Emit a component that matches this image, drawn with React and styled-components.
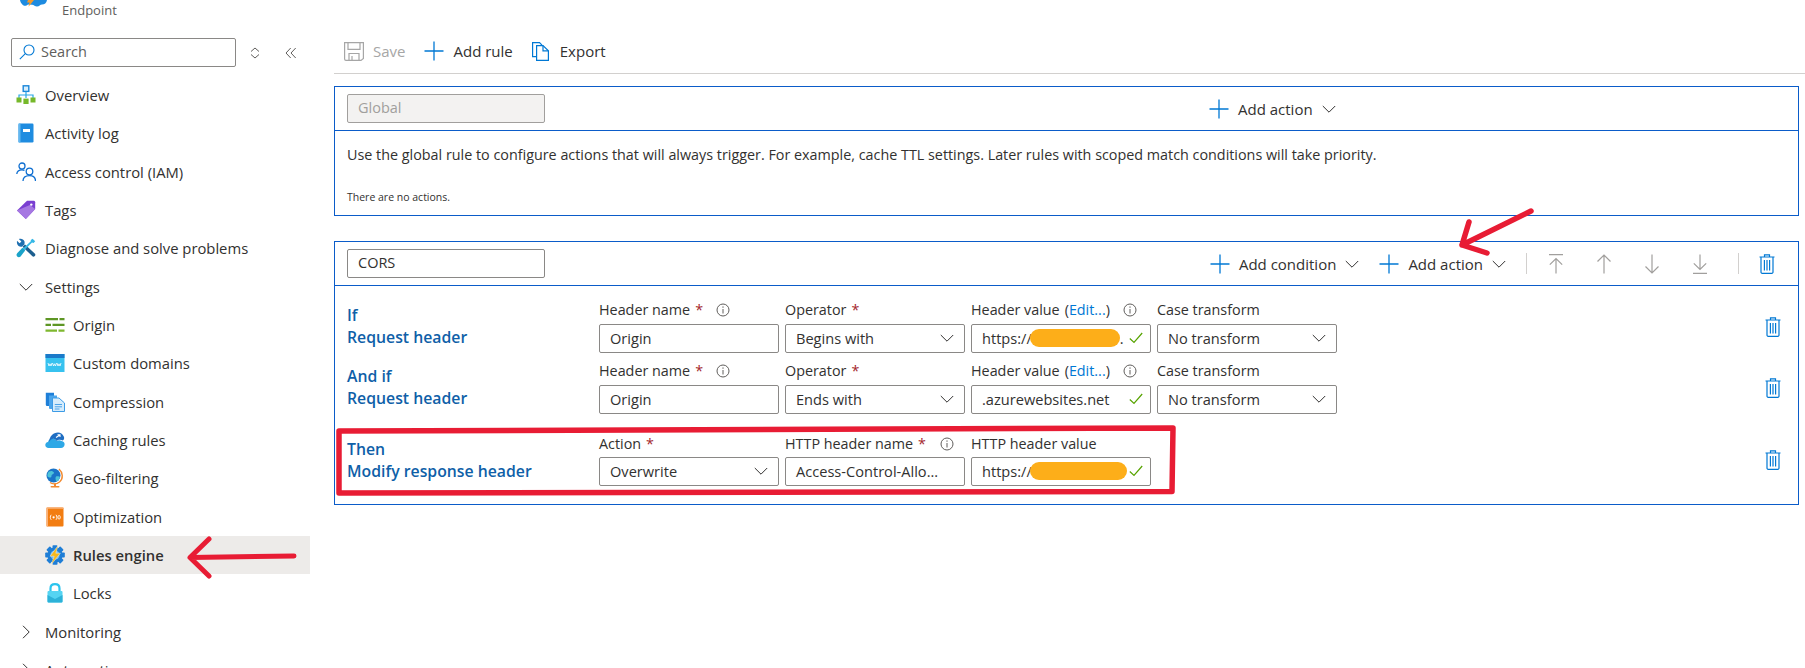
import React from "react"
import styled, { createGlobalStyle } from "styled-components"

const GlobalStyle = createGlobalStyle`
  html, body {
    margin: 0;
    background: #fff;
    font-family: "Open Sans", "Liberation Sans", sans-serif;
    color: #323130;
  }
`

/* ---------- small line icons ---------- */

const Plus = () => (
  <svg width="20" height="20" viewBox="0 0 20 20" fill="none" stroke="#0078d4" strokeWidth="1.3">
    <path d="M0.5 10H19.5M10 0.5V19.5" />
  </svg>
)

const Chevron = ({ dir = "down", color = "#323130", size = 14 }) => (
  <svg width={size} height={size} viewBox="0 0 14 14" fill="none" stroke={color} strokeWidth="1">
    {dir === "down" ? <path d="M0.8 4L7 10.2L13.2 4" /> : <path d="M4 0.8L10.2 7L4 13.2" />}
  </svg>
)

const Info = () => (
  <svg width="14" height="14" viewBox="0 0 14 14" fill="none" stroke="#605e5c" strokeWidth="1">
    <circle cx="7" cy="7" r="6" />
    <path d="M7 6V10.5M7 3.4V4.8" />
  </svg>
)

const Check = () => (
  <svg width="14" height="12" viewBox="0 0 14 12" fill="none" stroke="#57a300" strokeWidth="1.2">
    <path d="M0.8 6.5L5 10.5L13.2 1" />
  </svg>
)

const Trash = () => (
  <svg width="16" height="20" viewBox="0 0 16 20" fill="none" stroke="#0078d4" strokeWidth="1.2">
    <path d="M0.5 3H15.5M5.5 3V0.8H10.5V3M2 3V18A1.2 1.2 0 0 0 3.2 19.3H12.8A1.2 1.2 0 0 0 14 18V3" />
    <path d="M5.4 6V16.5M8 6V16.5M10.6 6V16.5" />
  </svg>
)

const MoveIcon = ({ kind }) => (
  <svg width="16" height="20" viewBox="0 0 16 20" fill="none" stroke="#a19f9d" strokeWidth="1.2">
    {kind === "top" && <path d="M1 0.7H15M8 4.5V19.5M1.8 10.7L8 4.5L14.2 10.7" />}
    {kind === "up" && <path d="M8 1V19.5M1.5 7.5L8 1L14.5 7.5" />}
    {kind === "down" && <path d="M8 0.5V19M1.5 12.5L8 19L14.5 12.5" />}
    {kind === "bottom" && <path d="M1 19.3H15M8 0.5V15.5M1.8 9.3L8 15.5L14.2 9.3" />}
  </svg>
)

const SaveIcon = () => (
  <svg width="20" height="19" viewBox="0 0 20 19" fill="none" stroke="#a6a6a6" strokeWidth="1.2">
    <path d="M0.6 0.6H19.4V16.5L17 18.4H2A1.4 1.4 0 0 1 0.6 17Z" />
    <path d="M4 0.6V7.4H16V0.6M5 18.4V11.5H15V18.4M8 14V18.4" />
  </svg>
)

const ExportIcon = () => (
  <svg width="17" height="19" viewBox="0 0 17 19" fill="none" stroke="#0078d4" strokeWidth="1.2">
    <path d="M4.5 14.6H0.6V0.6H7.5L10 3.2" />
    <path d="M4.6 3.6H11L16.4 8.8V18.4H4.6Z" />
    <path d="M11 3.6V8.8H16.4" />
  </svg>
)

const SearchIcon = () => (
  <svg width="16" height="16" viewBox="0 0 16 16" fill="none" stroke="#0078d4" strokeWidth="1.1">
    <circle cx="10" cy="6" r="5" />
    <path d="M6.3 9.7L0.8 15.2" />
  </svg>
)

/* ---------- coloured service icons, drawn on a 20 box ---------- */

const Svc = ({ children }) => (
  <svg width="20" height="20" viewBox="0 0 20 20">
    {children}
  </svg>
)

const OverviewIcon = () => (
  <Svc>
    <rect x="7.2" y="0.8" width="5.6" height="5.6" fill="#d8eefc" stroke="#1a86d9" strokeWidth="1.4" />
    <path d="M10 6.5V13M3 13V10H17V13" fill="none" stroke="#2aa7e8" strokeWidth="1.2" />
    <rect x="0.5" y="12.5" width="5" height="5" fill="#76b82a" />
    <rect x="7.4" y="13.6" width="5.2" height="5.4" fill="#76b82a" />
    <rect x="14.5" y="12.5" width="5" height="5" fill="#76b82a" />
  </Svc>
)

const BookIcon = () => (
  <Svc>
    <rect x="2.5" y="0.5" width="15" height="19" rx="1.2" fill="#1f8ce0" />
    <rect x="2.5" y="0.5" width="2" height="19" fill="#63b7f0" />
    <rect x="7" y="6" width="7" height="3" fill="#fff" />
  </Svc>
)

const PeopleIcon = () => (
  <Svc>
    <g fill="none" stroke="#0f6fd1" strokeWidth="1.3">
      <circle cx="6" cy="4" r="3" />
      <circle cx="13.5" cy="9.5" r="3.3" />
      <path d="M0.8 12C1 9 3 7.8 6 7.8C7 7.8 7.8 8 8.5 8.3" />
      <path d="M7 19C7 15.5 9.5 13.6 13.5 13.6C17.5 13.6 19.5 15.5 19.5 19" />
    </g>
  </Svc>
)

const TagIcon = () => (
  <Svc>
    <path d="M11 0.8H18A1.5 1.5 0 0 1 19.2 2.2V9L9.8 19L1 10.5Z" fill="#7a3fd1" />
    <path d="M1 10.5L9.8 19L19.2 9L14 5Z" fill="#a678e2" />
    <circle cx="15.3" cy="4.6" r="1.2" fill="#fff" />
  </Svc>
)

const ToolsIcon = () => (
  <Svc>
    <path d="M6.5 8.8L9 6.4L19 15.8C19.6 16.6 19.4 17.4 18.8 18C18 18.8 17 18.8 16.4 18.2Z" fill="#1d5f8f" />
    <path d="M1 2.8L3.6 5.2L5.4 3.6L2.8 1C5.2 0.2 7.6 1 8.4 3.2C8.8 4.4 8.6 5.6 8.4 6.4L6.2 8.6C5 9 3.6 8.8 2.6 8C1.2 6.8 0.6 4.8 1 2.8Z" fill="#1f6fb0" />
    <path d="M16.6 0.8L19.2 3.2L17.6 5L16 4.6L8 12.4L6.6 11L14.8 3.2L14.8 2Z" fill="#35b8e6" />
    <path d="M6.4 9.8L9.2 12.6L4.6 18.4C3.4 19.6 1.8 19.2 1 18.2C0.2 17.2 0.4 16 1.4 15Z" fill="#1aa3c9" />
  </Svc>
)

const OriginIcon = () => (
  <Svc>
    <path d="M0.5 3H13V5.2H0.5ZM14.5 3H19.5V5.2H14.5Z" fill="#5e9624" />
    <path d="M0.5 8.8H6V11H0.5ZM7.5 8.8H19.5V11H7.5Z" fill="#5e9624" />
    <path d="M0.5 14.6H12V16.8H0.5ZM13.5 14.6H19.5V16.8H13.5Z" fill="#7fb82f" />
  </Svc>
)

const DomainIcon = () => (
  <Svc>
    <rect x="0.5" y="1" width="19" height="18" fill="#37c2ef" />
    <rect x="0.5" y="1" width="19" height="4" fill="#1b7ac9" />
    <path d="M3 10L4 13L5 10.8L6 13L7 10M7.5 10L8.5 13L9.5 10.8L10.5 13L11.5 10M12 10L13 13L14 10.8L15 13L16 10" fill="none" stroke="#fff" strokeWidth="0.8" />
  </Svc>
)

const CompressionIcon = () => (
  <Svc>
    <path d="M0.8 0.8H9V14H2A1.2 1.2 0 0 1 0.8 12.8Z" fill="#1f7fd8" />
    <path d="M4 3.5H12V17H5A1 1 0 0 1 4 16Z" fill="#4aa5ec" />
    <path d="M7.5 6H14L19.5 11V19.5H7.5Z" fill="#d6ecfb" stroke="#3c9be6" />
    <path d="M9.8 12.5H17M9.8 14.8H17M9.8 17H14.5" stroke="#3c9be6" strokeWidth="0.9" />
  </Svc>
)

const CloudIcon = () => (
  <Svc>
    <path d="M3.5 18C1.5 18 0.3 16.6 0.3 15C0.3 13.4 1.4 12.3 3 12C3.6 9.5 5.8 8 8.5 8.5C10 9 11 10 11.5 11C13 10.2 15 10 16.5 11C18.7 11.2 19.8 12.8 19.6 14.6C19.4 16.8 18 18 16 18Z" fill="#2ea8e6" />
    <path d="M4 12C4.5 6.5 8 2.5 13 2.5C15.5 2.5 17.5 4 18.8 6.5C19.6 8 19 10 17.5 10.5C16 9.5 13 9.5 11.5 11C10.5 8.5 7 7 4 12Z" fill="#1f6ec2" />
    <path d="M11 7.5L14.5 5.2M12.5 4.8H15V7" fill="none" stroke="#fff" strokeWidth="1.1" />
  </Svc>
)

const GlobeIcon = () => (
  <Svc>
    <path d="M14 1C18 4.5 18.5 10.5 14.5 14C11.5 16.3 7.5 16.3 5 14.5" fill="none" stroke="#f28a30" strokeWidth="1.4" />
    <rect x="9" y="15.5" width="2" height="2.5" fill="#f28a30" />
    <rect x="5.5" y="18" width="9" height="1.6" rx="0.8" fill="#f28a30" />
    <circle cx="8.5" cy="7.5" r="7" fill="#1a74c8" />
    <path d="M4 3.5C6 2.5 8 3 9 4.5C9 6.5 6.5 6 6.5 8C6.5 10 4 10 2.5 8.5C2 6.5 2.8 4.5 4 3.5ZM11 8.5C12.8 8 14.5 8.5 15 9C14.5 11 13.5 12.8 11.5 13.5C10.5 12 10 10 11 8.5Z" fill="#4cc3d9" />
  </Svc>
)

const OptimizeIcon = () => (
  <Svc>
    <rect x="1.5" y="0.5" width="17" height="19" rx="1" fill="#f27d12" />
    <path d="M1.5 0.5H18.5V2L17 1.7H3V19.5H1.5Z" fill="#f9b27a" />
    <circle cx="8.6" cy="10.3" r="1.1" fill="#fff" />
    <rect x="13" y="8.6" width="2.2" height="3.4" rx="1" fill="none" stroke="#fff" strokeWidth="0.9" />
    <path d="M6.2 7.8C5 9.3 5 11.3 6.2 12.8M11 7.8C12.2 9.3 12.2 11.3 11 12.8" fill="none" stroke="#fff" strokeWidth="0.9" />
  </Svc>
)

const GearBoltIcon = () => (
  <Svc>
    <g fill="#1f7ed6">
      <circle cx="10" cy="10" r="7.6" />
      {[0, 45, 90, 135, 180, 225, 270, 315].map(a => (
        <rect key={a} x="7.5" y="0.2" width="5" height="4.6" rx="0.8" transform={`rotate(${a} 10 10)`} />
      ))}
    </g>
    <circle cx="10" cy="10" r="4.6" fill="#7dbdf0" />
    <path d="M13.2 0.4L5 11.2H9.2L6.2 19.6L15.4 8.2H10.8Z" fill="#f6b81e" stroke="#fff" strokeWidth="0.4" />
  </Svc>
)

const LockIcon = () => (
  <Svc>
    <path d="M5.5 9V5.5C5.5 3 7.3 1.2 10 1.2C12.7 1.2 14.5 3 14.5 5.5V9" fill="none" stroke="#2cc4ee" strokeWidth="2.2" />
    <rect x="2.5" y="8" width="15" height="11.5" rx="1" fill="#55d4f2" />
    <path d="M2.5 12L10 16L17.5 12V18.5A1 1 0 0 1 16.5 19.5H3.5A1 1 0 0 1 2.5 18.5Z" fill="#2db2d8" />
  </Svc>
)

const SortIcon = () => (
  <svg width="10" height="12" viewBox="0 0 10 12" fill="none" stroke="#605e5c" strokeWidth="1">
    <path d="M1 4.5L5 1L9 4.5M1 7.5L5 11L9 7.5" />
  </svg>
)

const CollapseIcon = () => (
  <svg width="12" height="12" viewBox="0 0 12 12" fill="none" stroke="#605e5c" strokeWidth="1">
    <path d="M5.7 1L1 6L5.7 11M10.7 1L6 6L10.7 11" />
  </svg>
)

const Logo = () => (
  <svg width="27" height="7" viewBox="0 0 27 7">
    <path d="M0 0H27C26.5 3 24.5 4.5 22 4.5C20 4.5 19.5 6.6 17 6.6C15 6.6 14 5 12 4.8L8 4.5C6 6.5 3 6 2 4C1 3 0.2 1.5 0 0Z" fill="#1d8be0" />
    <path d="M8 0H14L8.5 6.8L9.5 2.5H7Z" fill="#f39a2c" />
  </svg>
)

/* ---------- sidebar ---------- */

const Page = styled.div`
  position: relative;
  display: flex;
  width: 1805px;
  height: 668px;
  overflow: hidden;
`

const Sidebar = styled.aside`
  flex: none;
  width: 310px;
`

const Brand = styled.div`
  display: flex;
  height: 38px;
  padding-left: 20px;
  gap: 15px;
`

const BrandName = styled.span`
  font-size: 13px;
  line-height: 20px;
  color: #605e5c;
`

const SearchRow = styled.div`
  display: flex;
  align-items: center;
  height: 29px;
  margin: 0 0 9px 11px;
`

const SearchBox = styled.div`
  display: flex;
  align-items: center;
  box-sizing: border-box;
  width: 225px;
  height: 29px;
  padding: 0 0 2px 7px;
  gap: 6px;
  border: 1px solid #8a8886;
  border-radius: 2px;
  font-size: 14.5px;
  color: #605e5c;
`

const SideTool = styled.span`
  display: flex;
  margin-left: ${p => p.$gap}px;
`

const NavRow = styled.div`
  display: flex;
  align-items: center;
  height: 38.33px;
  padding-left: ${p => (p.$sub ? 45 : 16)}px;
  gap: ${p => (p.$sub ? 8 : 9)}px;
  font-size: 14.8px;
  font-weight: ${p => (p.$active ? 600 : 400)};
  color: #323130;
  background: ${p => (p.$active ? "#edebe9" : "transparent")};
  white-space: nowrap;
`

const NavIcon = styled.span`
  display: flex;
  flex: none;
  justify-content: center;
  width: 20px;
`

const navItems = [
  { label: "Overview", icon: <OverviewIcon /> },
  { label: "Activity log", icon: <BookIcon /> },
  { label: "Access control (IAM)", icon: <PeopleIcon /> },
  { label: "Tags", icon: <TagIcon /> },
  { label: "Diagnose and solve problems", icon: <ToolsIcon /> },
  { label: "Settings", icon: <Chevron /> },
  { label: "Origin", icon: <OriginIcon />, sub: true },
  { label: "Custom domains", icon: <DomainIcon />, sub: true },
  { label: "Compression", icon: <CompressionIcon />, sub: true },
  { label: "Caching rules", icon: <CloudIcon />, sub: true },
  { label: "Geo-filtering", icon: <GlobeIcon />, sub: true },
  { label: "Optimization", icon: <OptimizeIcon />, sub: true },
  { label: "Rules engine", icon: <GearBoltIcon />, sub: true, active: true },
  { label: "Locks", icon: <LockIcon />, sub: true },
  { label: "Monitoring", icon: <Chevron dir="right" /> },
  { label: "Automation", icon: <Chevron dir="right" /> },
]

/* ---------- main area ---------- */

const Main = styled.main`
  flex: 1;
  min-width: 0;
  padding: 0 6px 0 24px;
`

const Toolbar = styled.div`
  display: flex;
  align-items: center;
  box-sizing: border-box;
  height: 74px;
  margin: 0 -6px 12px 0;
  padding: 29px 0 0 10px;
  gap: 19px;
  border-bottom: 1px solid #d2d0ce;
`

const ToolButton = styled.div`
  display: flex;
  align-items: center;
  gap: ${p => p.$gap || 9}px;
  font-size: 15px;
  white-space: nowrap;
  color: ${p => (p.$disabled ? "#a6a6a6" : "#323130")};
`

const Card = styled.section`
  box-sizing: border-box;
  height: ${p => p.$height}px;
  margin-bottom: 25px;
  border: 1px solid #0b5cc9;
`

const CardHeader = styled.div`
  display: flex;
  align-items: center;
  box-sizing: border-box;
  height: 44px;
  padding: 0 23px 0 12px;
  border-bottom: 1px solid #0b5cc9;
`

const NameInput = styled.div`
  box-sizing: border-box;
  width: 198px;
  height: 29px;
  padding-left: 10px;
  border: 1px solid ${p => (p.$disabled ? "#a19f9d" : "#8a8886")};
  border-radius: 2px;
  background: ${p => (p.$disabled ? "#f3f2f1" : "#fff")};
  color: ${p => (p.$disabled ? "#a19f9d" : "#323130")};
  font-size: 14.5px;
  line-height: 26px;
`

const GlobalActions = styled.div`
  display: flex;
  margin: 1px 0 0 664px;
`

const GlobalBody = styled.div`
  padding: 14px 12px 0;
`

const GlobalText = styled.p`
  margin: 0;
  font-size: 14.35px;
  line-height: 20px;
`

const NoActions = styled.p`
  margin: 24px 0 0;
  font-size: 10.5px;
  line-height: 16px;
`

const HeaderTools = styled.div`
  display: flex;
  align-items: center;
  margin-left: auto;
`

const ButtonSpacer = styled.span`
  width: 20px;
`

const Separator = styled.span`
  width: 1px;
  height: 21px;
  margin: 0 ${p => p.$right}px 0 ${p => p.$left}px;
  background: #d2d0ce;
`

const MoveButton = styled.span`
  display: flex;
  justify-content: center;
  width: 48px;
`

const RulesBody = styled.div`
  padding: 14px 16px 0 12px;
`

const RuleRow = styled.div`
  display: flex;
  align-items: center;
  margin-top: ${p => p.$top}px;
`

const RuleTitle = styled.div`
  flex: none;
  width: 252px;
  margin-bottom: ${p => p.$lift || 0}px;
  font-size: 15.8px;
  font-weight: 600;
  line-height: 22px;
  color: #0f5fa8;
`

const Fields = styled.div`
  display: grid;
  grid-template-columns: repeat(4, 180px);
  column-gap: 6px;
`

const Field = styled.div`
  display: flex;
  flex-direction: column;
  gap: ${p => p.$gap || 5}px;
`

const FieldLabel = styled.div`
  display: flex;
  align-items: center;
  height: 19px;
  font-size: 14.35px;
  white-space: nowrap;
`

const Star = styled.span`
  margin-left: 5px;
  color: #a4262c;
`

const InfoSlot = styled.span`
  display: flex;
  margin-left: ${p => p.$gap}px;
`

const EditLink = styled.span`
  margin-left: 5px;
  color: #0078d4;
`

const Paren = styled.span`
  color: #323130;
`

const Control = styled.div`
  display: flex;
  align-items: center;
  justify-content: space-between;
  box-sizing: border-box;
  height: 29px;
  padding: 0 ${p => p.$right}px 1px 10px;
  border: 1px solid #8a8886;
  border-radius: 2px;
  font-size: 14.6px;
  white-space: nowrap;
  overflow: hidden;
`

const ControlValue = styled.span`
  display: flex;
  align-items: center;
`

const Redacted = styled.span`
  display: block;
  width: ${p => p.$width}px;
  height: 18px;
  margin-left: -2px;
  border-radius: 9px;
  background: #fdae19;
`

const TrashSlot = styled.div`
  display: flex;
  margin-left: auto;
  padding-right: 1px;
`

const Annotations = styled.svg`
  position: absolute;
  top: 0;
  left: 0;
  pointer-events: none;
`

const Select = ({ value }) => (
  <Control $right={10}>
    <ControlValue>{value}</ControlValue>
    <Chevron />
  </Control>
)

const CheckedInput = ({ children }) => (
  <Control $right={7}>
    <ControlValue>{children}</ControlValue>
    <Check />
  </Control>
)

const AddMenu = ({ label }) => (
  <ToolButton>
    <Plus />
    {label}
    <Chevron />
  </ToolButton>
)

function ConditionRow({ top, kind, operator, value }) {
  return (
    <RuleRow $top={top}>
      <RuleTitle $lift={2}>{kind}<br />Request header</RuleTitle>
      <Fields>
        <Field>
          <FieldLabel>
            Header name<Star>*</Star>
            <InfoSlot $gap={13}><Info /></InfoSlot>
          </FieldLabel>
          <Control $right={10}>Origin</Control>
        </Field>
        <Field>
          <FieldLabel>Operator<Star>*</Star></FieldLabel>
          <Select value={operator} />
        </Field>
        <Field>
          <FieldLabel>
            Header value<EditLink><Paren>(</Paren>Edit...<Paren>)</Paren></EditLink>
            <InfoSlot $gap={13}><Info /></InfoSlot>
          </FieldLabel>
          <CheckedInput>{value}</CheckedInput>
        </Field>
        <Field>
          <FieldLabel>Case transform</FieldLabel>
          <Select value="No transform" />
        </Field>
      </Fields>
      <TrashSlot><Trash /></TrashSlot>
    </RuleRow>
  )
}

export default function App() {
  return (
    <Page>
      <GlobalStyle />
      <Sidebar>
        <Brand>
          <Logo />
          <BrandName>Endpoint</BrandName>
        </Brand>
        <SearchRow>
          <SearchBox><SearchIcon />Search</SearchBox>
          <SideTool $gap={14}><SortIcon /></SideTool>
          <SideTool $gap={25}><CollapseIcon /></SideTool>
        </SearchRow>
        {navItems.map(item => (
          <NavRow key={item.label} $sub={item.sub} $active={item.active}>
            <NavIcon>{item.icon}</NavIcon>
            {item.label}
          </NavRow>
        ))}
      </Sidebar>

      <Main>
        <Toolbar>
          <ToolButton $disabled><SaveIcon />Save</ToolButton>
          <ToolButton><Plus />Add rule</ToolButton>
          <ToolButton $gap={11}><ExportIcon />Export</ToolButton>
        </Toolbar>

        <Card $height={130}>
          <CardHeader>
            <NameInput $disabled>Global</NameInput>
            <GlobalActions>
              <AddMenu label="Add action" />
            </GlobalActions>
          </CardHeader>
          <GlobalBody>
            <GlobalText>
              Use the global rule to configure actions that will always trigger. For example, cache TTL settings. Later rules with scoped match conditions will take priority.
            </GlobalText>
            <NoActions>There are no actions.</NoActions>
          </GlobalBody>
        </Card>

        <Card $height={264}>
          <CardHeader>
            <NameInput>CORS</NameInput>
            <HeaderTools>
              <AddMenu label="Add condition" />
              <ButtonSpacer />
              <AddMenu label="Add action" />
              <Separator $left={20} $right={5} />
              <MoveButton><MoveIcon kind="top" /></MoveButton>
              <MoveButton><MoveIcon kind="up" /></MoveButton>
              <MoveButton><MoveIcon kind="down" /></MoveButton>
              <MoveButton><MoveIcon kind="bottom" /></MoveButton>
              <Separator $left={14} $right={20} />
              <Trash />
            </HeaderTools>
          </CardHeader>
          <RulesBody>
            <ConditionRow
              top={0}
              kind="If"
              operator="Begins with"
              value={<>https://<Redacted $width={90} />.</>}
            />
            <ConditionRow
              top={8}
              kind="And if"
              operator="Ends with"
              value=".azurewebsites.net"
            />
            <RuleRow $top={20}>
              <RuleTitle>Then<br />Modify response header</RuleTitle>
              <Fields>
                <Field $gap={4}>
                  <FieldLabel>Action<Star>*</Star></FieldLabel>
                  <Select value="Overwrite" />
                </Field>
                <Field $gap={4}>
                  <FieldLabel>
                    HTTP header name<Star>*</Star>
                    <InfoSlot $gap={14}><Info /></InfoSlot>
                  </FieldLabel>
                  <Control $right={4}>Access-Control-Allo...</Control>
                </Field>
                <Field $gap={4}>
                  <FieldLabel>HTTP header value</FieldLabel>
                  <CheckedInput>https://<Redacted $width={97} /></CheckedInput>
                </Field>
              </Fields>
              <TrashSlot><Trash /></TrashSlot>
            </RuleRow>
          </RulesBody>
        </Card>
      </Main>

      {/* red markup drawn over the screenshot */}
      <Annotations width="1805" height="668" viewBox="0 0 1805 668" fill="none" stroke="#e81c34" strokeLinecap="round" strokeLinejoin="round">
        <path d="M339 431L1173 428L1172 491.5L339 493Z" strokeWidth="5.5" />
        <path d="M1531 211L1462 245M1469 222L1462 245L1487 253" strokeWidth="5.5" />
        <path d="M294 556L190 557.5M209 539L190 557.5L209 576" strokeWidth="5" />
      </Annotations>
    </Page>
  )
}
